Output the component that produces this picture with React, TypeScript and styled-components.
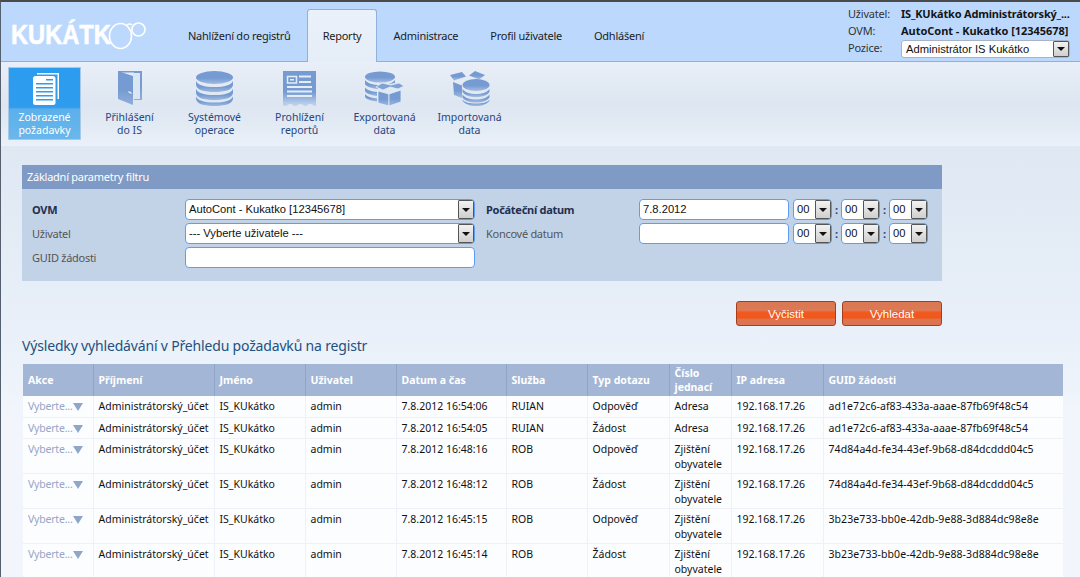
import React from 'react';
import styled, { createGlobalStyle } from 'styled-components';

const Global = createGlobalStyle`
  html, body { margin: 0; padding: 0; height: 100%; overflow: hidden; }
  body { font-family: "Noto Sans", "Open Sans", sans-serif; font-size: 11px; background: #f1f5fc; color: #111; }
`;

const Page = styled.div`
  width: 1080px; height: 577px; overflow: hidden; box-sizing: border-box;
  border-top: 2px solid #4a4a4a; border-left: 1px solid #55606e;
  background: linear-gradient(180deg, #dfe8f3 0, #dfe8f3 150px, #e9f0f9 330px, #f2f6fc 420px);
`;
const Header = styled.header`
  height: 59px; background: #bcd9fd; border-bottom: 1px solid #8fb0d8; display: flex; position: relative; box-sizing: content-box;
`;
const Logo = styled.div`
  width: 171px; display: flex; align-items: flex-start; padding: 18px 0 0 10px; box-sizing: border-box; color: #fff;
`;
const LogoText = styled.span`
  display: inline-block; width: 97px; white-space: nowrap;
  font: 700 27.5px/30px "Liberation Sans", Arial, sans-serif; -webkit-text-stroke: 0.6px #fff;
  transform: scaleX(0.86); transform-origin: left;
`;
const Tabs = styled.nav` display: flex; align-items: flex-start; padding-top: 7px; height: 53px; `;
const Tab = styled.div<{ $active?: boolean }>`
  height: 53px; box-sizing: border-box; padding: 0 16px; line-height: 53px; font-size: 11px; letter-spacing: -0.25px; color: #1c1c1c;
  white-space: nowrap;
  ${p => p.$active ? `
    background: linear-gradient(180deg, #eaf1fa 0, #e5edf7 100%);
    border: 1px solid #90b2da; border-bottom: none; border-radius: 3px 3px 0 0; padding: 0 15px; line-height: 51px;
  ` : ''}
`;
const UserBox = styled.div`
  position: absolute; left: 847px; top: 3px; width: 225px; display: grid; grid-template-columns: 53px 1fr; grid-auto-rows: 17px; align-items: center; font-size: 11px; letter-spacing: -0.2px; color: #333;
`;
const UserValue = styled.div<{ $tight?: boolean }>`
  font-weight: 700; color: #151515; white-space: nowrap; font-size: 11px; letter-spacing: ${p => p.$tight ? '-0.2px' : '-0.03px'};
`;
const SmallSelect = styled.div`
  width: 169px; height: 18px; box-sizing: border-box; background: #fff; border: 1px solid #a8b4c4; border-radius: 3px; display: flex; justify-content: space-between; align-items: stretch;
  font: 11.2px/16px "Liberation Sans", Arial, sans-serif; letter-spacing: 0; color: #111; padding-left: 4px; margin-top: 2px;
`;
const Ribbon = styled.div`
  height: 84px; box-sizing: border-box; padding: 5px 0 0 7px; display: flex; gap: 12px;
  background: linear-gradient(180deg, #e9eff8 0, #dde6f1 50%, #e2eaf4 75%, #eaf1f9 100%);
`;
const RibbonItem = styled.div<{ $active?: boolean }>`
  width: 73px; height: 73px; box-sizing: border-box; border-radius: 2px; display: flex; flex-direction: column; align-items: center; text-align: center;
  font-size: 10.5px; line-height: 13px; color: ${p => p.$active ? '#fff' : '#27457f'}; padding-top: 4px;
  background: ${p => p.$active ? 'linear-gradient(180deg, #2c9cf0 0, #2f9cee 55%, #5cb0ea 58%, #6ab7ec 100%)' : 'transparent'};
  ${p => p.$active ? 'box-shadow: 0 0 0 1px #a8c8e8 inset;' : ''}
`;
const IconSlot = styled.div` height: 37px; display: flex; justify-content: center; align-items: flex-start; margin-bottom: 3px; `;
const Content = styled.main` padding: 19px 16px 0 21px; `;
const Panel = styled.section` width: 920px; background: #c3d3e7; height: 116px; `;
const PanelTitle = styled.div` height: 24px; background: #7f9ac4; color: #fff; padding-left: 5px; line-height: 24px; font-size: 11px; letter-spacing: -0.25px; `;
const PanelBody = styled.div`
  display: grid; grid-template-columns: 454px 1fr; padding: 10px 0 0 10px;
`;
const FilterCol = styled.div` display: flex; flex-direction: column; gap: 3px; `;
const FieldRow = styled.div` display: flex; align-items: center; height: 21px; `;
const FieldLabel = styled.label<{ $bold?: boolean; $w: number }>`
  width: ${p => p.$w}px; flex: none; font-size: 11px; letter-spacing: -0.28px; font-weight: ${p => p.$bold ? 700 : 400}; color: ${p => p.$bold ? '#1f2f4f' : '#555'};
`;
const Field = styled.div<{ $w: number }>`
  width: ${p => p.$w}px; height: 21px; box-sizing: border-box; flex: none; background: #fff; border: 1px solid #5f9df0; border-radius: 4px; overflow: hidden;
  display: flex; justify-content: space-between; align-items: stretch; padding-left: 3px;
  font: 11.2px/19px "Liberation Sans", Arial, sans-serif; color: #111;
`;
const ArrowBtn = styled.span`
  width: 16px; flex: none; box-sizing: border-box; border: 1px solid #555; border-radius: 1px; background: linear-gradient(180deg, #f2f2f2, #cfcfcf); display: flex; align-items: center; justify-content: center;
  &::after { content: ""; border: 4px solid transparent; border-top: 4px solid #111; border-bottom: none; }
`;
const Colon = styled.span` width: 9px; text-align: center; font-weight: 700; color: #24406c; font-size: 11px; `;
const Spacer = styled.span` width: 4px; flex: none; `;
const Actions = styled.div` width: 920px; display: flex; justify-content: flex-end; gap: 6px; margin-top: 20px; `;
const ActionBtn = styled.div`
  width: 100px; height: 25px; box-sizing: border-box; border: 1px solid #a33f1c; border-radius: 3px; color: #fff; text-align: center;
  font: 11.5px/24px "Liberation Sans", Arial, sans-serif;
  background: linear-gradient(180deg, #db7854 0, #dd7a55 40%, #f25a1e 42%, #f2561c 70%, #dd7450 74%, #dd7450 100%);
`;
const Title = styled.h2` margin: 9px 0 9px; font-size: 14px; font-weight: 400; line-height: 21px; height: 20px; color: #23507f; letter-spacing: -0.17px; `;
const Table = styled.table`
  border-collapse: collapse; table-layout: fixed; width: 1040px; margin-left: 1px; font-size: 10.5px; background: #fcfdff;
`;
const Th = styled.th`
  background: #a3b6d5; color: #fff; font-weight: 700; text-align: left; vertical-align: middle; padding: 0 5px; height: 32px; line-height: 14px; border-right: 1px solid #8ea5c8; box-sizing: border-box; font-size: 10.5px;
  &:last-child { border-right: none; }
`;
const Td = styled.td`
  vertical-align: top; padding: 3px 5px 0; border-right: 1px solid #eef2f8; border-bottom: 1px solid #eef2f8; line-height: 15px; color: #111; overflow: hidden; white-space: normal; box-sizing: border-box;
  &:last-child { border-right: none; }
`;
const ActionCell = styled.div` display: flex; align-items: center; color: #98a5c8; white-space: nowrap; letter-spacing: -0.2px; `;
const Tri = styled.span` margin-top: 1px; border: 5px solid transparent; border-top: 8px solid #8fa6c8; border-bottom: none; `;
const TallRow = styled.tr<{ $h: number }>` height: ${p => p.$h}px; `;
const Guid = styled.span` letter-spacing: 0.08px; white-space: nowrap; `;

const blue = '#769bd2';
const Fade = ({ id, end = 0.55 }: { id: string; end?: number }) => (
  <defs>
    <linearGradient id={id} x1="0" y1="0" x2="0" y2="1">
      <stop offset="0" stopColor={blue} />
      <stop offset="0.55" stopColor={blue} />
      <stop offset="1" stopColor={blue} stopOpacity={end} />
    </linearGradient>
  </defs>
);
const Docs = () => (
  <svg width="26" height="32" viewBox="0 0 26 32" style={{ marginTop: 2, marginLeft: 2 }}>
    <path d="M4 0h22v26h-1.500V1.500H4z" fill="#fff" />
    <path d="M2.500 3H20q2.500 0 2.500 2.500v24q0 2.500-2.500 2.500H2.500Q0 32 0 29.500v-24Q0 3 2.500 3z" fill="#fff" />
    <g fill="#2f9cee">
      <rect x="13" y="6" width="7" height="1.500" /><rect x="3" y="10" width="17" height="1.500" />
      <rect x="3" y="14" width="17" height="1.500" /><rect x="3" y="18" width="17" height="1.500" />
      <rect x="3" y="22" width="17" height="1.500" /><rect x="3" y="26" width="17" height="1.500" />
    </g>
  </svg>
);
const Door = () => (
  <svg width="24" height="34" viewBox="0 0 24 34">
    <Fade id="fDoor" end={0.75} />
    <path d="M0 0h24v29h-8V1.500H0z" fill="url(#fDoor)" />
    <rect x="15" y="2" width="7" height="26" fill="#dbe6f3" />
    <path d="M0 0l15 5v29L0 28z" fill="url(#fDoor)" />
    <path d="M10.500 20l3 1.500v1.500l-3-1.500z" fill="#eef3fa" />
  </svg>
);
const Db = () => (
  <svg width="37" height="35" viewBox="0 0 37 35">
    <Fade id="fDb" end={0.6} />
    <g fill="url(#fDb)">
      <ellipse cx="18.500" cy="6.500" rx="18.500" ry="6.500" />
      <path d="M0 10c2 4 8 6 18.500 6S35 14 37 10v4c-1 5-8 7-18.500 7S1 19 0 14z" />
      <path d="M0 18c2 4 8 6 18.500 6S35 22 37 18v4c-1 5-8 7-18.500 7S1 27 0 22z" />
      <path d="M0 25.500c2 4 8 6 18.500 6S35 29.500 37 25.500v2.500c-1 5-8 7-18.500 7S1 33 0 28z" />
    </g>
  </svg>
);
const Report = () => (
  <svg width="33" height="35" viewBox="0 0 33 35">
    <defs>
      <linearGradient id="fRep" x1="0" y1="0" x2="0" y2="1">
        <stop offset="0" stopColor={blue} /><stop offset="0.6" stopColor={blue} /><stop offset="1" stopColor="#c4d6ee" />
      </linearGradient>
    </defs>
    <path d="M0 0h33v35h-2a4.500 4.500 0 0 0-7.500 0h-2.500a4.500 4.500 0 0 0-7.500 0h-2.500a4.500 4.500 0 0 0-7.500 0H0z" fill="url(#fRep)" />
    <g fill="#e4ecf6">
      <rect x="4.500" y="5.500" width="9" height="6.500" fill="none" stroke="#e4ecf6" strokeWidth="1.500" />
      <rect x="7" y="8" width="4" height="1.500" fill="#e4ecf6" />
      <rect x="16" y="4.500" width="12" height="2" /><rect x="16" y="10" width="12" height="2" />
      <rect x="4" y="15" width="25" height="2" /><rect x="4" y="19.500" width="25" height="2" /><rect x="4" y="24" width="25" height="2" />
    </g>
  </svg>
);
const Export = () => (
  <svg width="39" height="35" viewBox="0 0 39 35">
    <Fade id="fExp" end={0.6} />
    <g fill="url(#fExp)">
      <ellipse cx="15" cy="6" rx="15" ry="5.500" />
      <path d="M0 9c2 3 8 5 15 5s13-2 15-5v3l-17 3v3C6 17.500 1 15.500 0 13z" />
      <path d="M0 16.500c2 2.500 6 4 12 4.500v4C6 24.500 1 22.500 0 20z" />
      <path d="M0 23c2 2.500 6 4 12 4.500v3C6 30 1 28 0 26z" />
    </g>
    <path d="M11 16l6-4 9 2 8-2 5 3-6 3-8-2-7 3z" fill="#7fa2d6" stroke="#e4ecf6" strokeWidth="0.800" />
    <path d="M13 20l11 3v12l-11-3z" fill="url(#fExp)" stroke="#e4ecf6" strokeWidth="0.800" />
    <path d="M36 19l-12 4v12l12-4z" fill="url(#fExp)" stroke="#e4ecf6" strokeWidth="0.800" />
  </svg>
);
const Import = () => (
  <svg width="40" height="35" viewBox="0 0 40 35">
    <Fade id="fImp" end={0.55} />
    <g fill="url(#fImp)">
      <path d="M0 4l12-3 4 4.500-12 4z" />
      <path d="M19 4.500L25 0l10 4-6 4.500z" />
      <path d="M3 11l9 3.500V27l-8-3z" />
      <ellipse cx="26" cy="14" rx="13.500" ry="6" />
      <path d="M12.500 18c2 3 7 5 13.500 5s11.500-2 13.500-5v3c-2 3-7 5-13.500 5s-11.500-2-13.500-5z" />
      <path d="M12.500 23.500c2 3 7 5 13.500 5s11.500-2 13.500-5v3c-2 3-7 5-13.500 5s-11.500-2-13.500-5z" />
      <path d="M12.500 28.500c2 3 7 4 13.500 4s11.500-1 13.500-4v1c-2 3.500-7 5.500-13.500 5.500s-11.500-2-13.500-5.500z" />
    </g>
  </svg>
);

const ribbon = [
  { icon: <Docs />, a: 'Zobrazené', b: 'požadavky', active: true },
  { icon: <Door />, a: 'Přihlášení', b: 'do IS' },
  { icon: <Db />, a: 'Systémové', b: 'operace' },
  { icon: <Report />, a: 'Prohlížení', b: 'reportů' },
  { icon: <Export />, a: 'Exportovaná', b: 'data' },
  { icon: <Import />, a: 'Importovaná', b: 'data' },
];

const cols = [70, 121, 91, 91, 110, 81, 82, 62, 92, 240];
const heads = ['Akce', 'Příjmení', 'Jméno', 'Uživatel', 'Datum a čas', 'Služba', 'Typ dotazu', 'Číslo jednací', 'IP adresa', 'GUID žádosti'];
const g1 = 'ad1e72c6-af83-433a-aaae-87fb69f48c54';
const g2 = '74d84a4d-fe34-43ef-9b68-d84dcddd04c5';
const g3 = '3b23e733-bb0e-42db-9e88-3d884dc98e8e';
const rows = [
  ['7.8.2012 16:54:06', 'RUIAN', 'Odpověď', 'Adresa', g1, 21],
  ['7.8.2012 16:54:05', 'RUIAN', 'Žádost', 'Adresa', g1, 21],
  ['7.8.2012 16:48:16', 'ROB', 'Odpověď', 'Zjištění obyvatele', g2, 35],
  ['7.8.2012 16:48:12', 'ROB', 'Žádost', 'Zjištění obyvatele', g2, 35],
  ['7.8.2012 16:45:15', 'ROB', 'Odpověď', 'Zjištění obyvatele', g3, 35],
  ['7.8.2012 16:45:14', 'ROB', 'Žádost', 'Zjištění obyvatele', g3, 35],
] as const;

const TimeSel = () => <Field $w={39}>00<ArrowBtn /></Field>;
const Times = () => (<><Spacer /><TimeSel /><Colon>:</Colon><TimeSel /><Colon>:</Colon><TimeSel /></>);

export default function App() {
  return (
    <Page>
      <Global />
      <Header>
        <Logo>
          <LogoText>KUKÁTK</LogoText>
          <svg width="40" height="32" viewBox="0 0 40 32">
            <ellipse cx="12.500" cy="16" rx="11" ry="12.500" fill="none" stroke="#fff" strokeWidth="1.600" />
            <circle cx="30.500" cy="9.500" r="6.500" fill="none" stroke="#fff" strokeWidth="1.600" />
            <path d="M19 5q2.500-2 5 0" fill="none" stroke="#fff" strokeWidth="1.600" />
          </svg>
        </Logo>
        <Tabs>
          <Tab>Nahlížení do registrů</Tab>
          <Tab $active>Reporty</Tab>
          <Tab>Administrace</Tab>
          <Tab>Profil uživatele</Tab>
          <Tab>Odhlášení</Tab>
        </Tabs>
        <UserBox>
          <span>Uživatel:</span><UserValue $tight>IS_KUkátko Administrátorský_...</UserValue>
          <span>OVM:</span><UserValue>AutoCont - Kukatko [12345678]</UserValue>
          <span>Pozice:</span><SmallSelect>Administrátor IS Kukátko<ArrowBtn /></SmallSelect>
        </UserBox>
      </Header>
      <Ribbon>
        {ribbon.map(r => (
          <RibbonItem key={r.a} $active={r.active}>
            <IconSlot>{r.icon}</IconSlot>
            <span>{r.a}<br />{r.b}</span>
          </RibbonItem>
        ))}
      </Ribbon>
      <Content>
        <Panel>
          <PanelTitle>Základní parametry filtru</PanelTitle>
          <PanelBody>
            <FilterCol>
              <FieldRow><FieldLabel $bold $w={153}>OVM</FieldLabel><Field $w={290}>AutoCont - Kukatko [12345678]<ArrowBtn /></Field></FieldRow>
              <FieldRow><FieldLabel $w={153}>Uživatel</FieldLabel><Field $w={290}>--- Vyberte uživatele ---<ArrowBtn /></Field></FieldRow>
              <FieldRow><FieldLabel $w={153}>GUID žádosti</FieldLabel><Field $w={290} /></FieldRow>
            </FilterCol>
            <FilterCol>
              <FieldRow><FieldLabel $bold $w={153}>Počáteční datum</FieldLabel><Field $w={150}>7.8.2012</Field><Times /></FieldRow>
              <FieldRow><FieldLabel $w={153}>Koncové datum</FieldLabel><Field $w={150} /><Times /></FieldRow>
            </FilterCol>
          </PanelBody>
        </Panel>
        <Actions><ActionBtn>Vyčistit</ActionBtn><ActionBtn>Vyhledat</ActionBtn></Actions>
        <Title>Výsledky vyhledávání v Přehledu požadavků na registr</Title>
        <Table>
          <colgroup>{cols.map((c, i) => <col key={i} width={c} />)}</colgroup>
          <thead><tr>{heads.map(h => <Th key={h}>{h}</Th>)}</tr></thead>
          <tbody>
            {rows.map((r, i) => (
              <TallRow key={i} $h={r[5]}>
                <Td><ActionCell>Vyberte...<Tri /></ActionCell></Td>
                <Td>Administrátorský_účet</Td>
                <Td>IS_KUkátko</Td>
                <Td>admin</Td>
                <Td>{r[0]}</Td>
                <Td>{r[1]}</Td>
                <Td>{r[2]}</Td>
                <Td>{r[3]}</Td>
                <Td>192.168.17.26</Td>
                <Td><Guid>{r[4]}</Guid></Td>
              </TallRow>
            ))}
          </tbody>
        </Table>
      </Content>
    </Page>
  );
}
